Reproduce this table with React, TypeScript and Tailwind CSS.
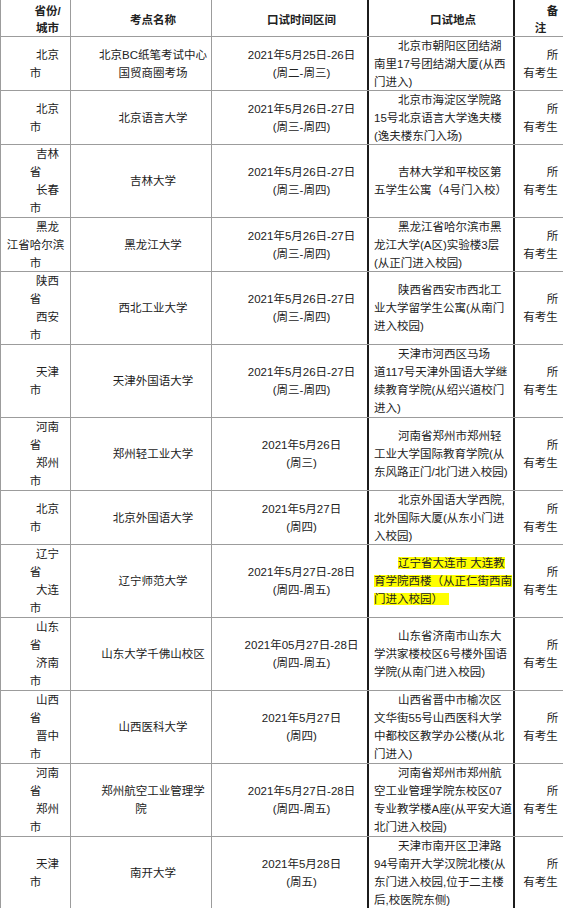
import React from 'react';

type Row = {
  h: string;
  c1: string[];
  c2: string[];
  c3: string[];
  c4: string[];
  hl?: boolean;
};

// lines starting with "+" get the 2em first-line indent of the source document
const rows: Row[] = [
  {
    h: 'h-[54px]',
    c1: ['+北京', '市'],
    c2: ['+北京BC纸笔考试中心', '+国贸商圈考场'],
    c3: ['+2021年5月25日-26日', '+(周二-周三)'],
    c4: ['+北京市朝阳区团结湖', '南里17号团结湖大厦(从西', '门进入)'],
  },
  {
    h: 'h-[54px]',
    c1: ['+北京', '市'],
    c2: ['+北京语言大学'],
    c3: ['+2021年5月26日-27日', '+(周三-周四)'],
    c4: ['+北京市海淀区学院路', '15号北京语言大学逸夫楼', '(逸夫楼东门入场)'],
  },
  {
    h: 'h-[73px]',
    c1: ['+吉林', '省', '+长春', '市'],
    c2: ['+吉林大学'],
    c3: ['+2021年5月26日-27日', '+(周三-周四)'],
    c4: ['+吉林大学和平校区第', '五学生公寓（4号门入校）'],
  },
  {
    h: 'h-[54px]',
    c1: ['+黑龙', '江省哈尔滨', '市'],
    c2: ['+黑龙江大学'],
    c3: ['+2021年5月26日-27日', '+(周三-周四)'],
    c4: ['+黑龙江省哈尔滨市黑', '龙江大学(A区)实验楼3层', '(从正门进入校园)'],
  },
  {
    h: 'h-[73px]',
    c1: ['+陕西', '省', '+西安', '市'],
    c2: ['+西北工业大学'],
    c3: ['+2021年5月26日-27日', '+(周三-周四)'],
    c4: ['+陕西省西安市西北工', '业大学留学生公寓(从南门', '进入校园)'],
  },
  {
    h: 'h-[73px]',
    c1: ['+天津', '市'],
    c2: ['+天津外国语大学'],
    c3: ['+2021年5月26日-27日', '+(周三-周四)'],
    c4: ['+天津市河西区马场', '道117号天津外国语大学继', '续教育学院(从绍兴道校门', '进入)'],
  },
  {
    h: 'h-[73px]',
    c1: ['+河南', '省', '+郑州', '市'],
    c2: ['+郑州轻工业大学'],
    c3: ['+2021年5月26日', '+(周三)'],
    c4: ['+河南省郑州市郑州轻', '工业大学国际教育学院(从', '东风路正门/北门进入校园)'],
  },
  {
    h: 'h-[54px]',
    c1: ['+北京', '市'],
    c2: ['+北京外国语大学'],
    c3: ['+2021年5月27日', '+(周四)'],
    c4: ['+北京外国语大学西院,', '北外国际大厦(从东小门进', '入校园)'],
  },
  {
    h: 'h-[73px]',
    c1: ['+辽宁', '省', '+大连', '市'],
    c2: ['+辽宁师范大学'],
    c3: ['+2021年5月27日-28日', '+(周四-周五)'],
    c4: ['+辽宁省大连市 大连教', '育学院西楼（从正仁街西南', '门进入校园）\u00a0\u00a0'],
    hl: true,
  },
  {
    h: 'h-[73px]',
    c1: ['+山东', '省', '+济南', '市'],
    c2: ['+山东大学千佛山校区'],
    c3: ['+2021年05月27日-28日', '+(周四-周五)'],
    c4: ['+山东省济南市山东大', '学洪家楼校区6号楼外国语', '学院(从南门进入校园)'],
  },
  {
    h: 'h-[73px]',
    c1: ['+山西', '省', '+晋中', '市'],
    c2: ['+山西医科大学'],
    c3: ['+2021年5月27日', '+(周四)'],
    c4: ['+山西省晋中市榆次区', '文华街55号山西医科大学', '中都校区教学办公楼(从北', '门进入)'],
  },
  {
    h: 'h-[73px]',
    c1: ['+河南', '省', '+郑州', '市'],
    c2: ['+郑州航空工业管理学', '院'],
    c3: ['+2021年5月27日-28日', '+(周四-周五)'],
    c4: ['+河南省郑州市郑州航', '空工业管理学院东校区07', '专业教学楼A座(从平安大道', '北门进入校园)'],
  },
  {
    h: 'h-[73px]',
    c1: ['+天津', '市'],
    c2: ['+南开大学'],
    c3: ['+2021年5月28日', '+(周五)'],
    c4: ['+天津市南开区卫津路', '94号南开大学汉院北楼(从', '东门进入校园,位于二主楼', '后,校医院东侧)'],
  },
];

function Lines({ lines, hl }: { lines: string[]; hl?: boolean }) {
  return (
    <>
      {lines.map((l, i) => {
        const text = l.replace(/^\+/, '');
        return (
          <div key={i} className={l.startsWith('+') ? 'pl-[24px] whitespace-pre' : 'whitespace-pre'}>
            {hl ? <span className="bg-[#ffff00]">{text}</span> : text}
          </div>
        );
      })}
    </>
  );
}

const c1 = 'w-[71px] shrink-0 flex flex-col justify-center text-center border-l border-r border-[#9c9c9c]';
const c2 = 'w-[141px] shrink-0 flex flex-col justify-center text-center border-r border-[#9c9c9c]';
const c3 = 'w-[155px] shrink-0 flex flex-col justify-center text-center';
const c4 = 'w-[148px] shrink-0 flex flex-col justify-center text-left pl-[5px] border-l-2 border-r-2 border-[#1c1c1c]';
const c5 = 'w-[51px] shrink-0 flex flex-col justify-center text-center';

export default function App() {
  return (
    <div className="w-[563px] h-[908px] overflow-hidden bg-white">
      <div className="w-[566px] text-[11.5px] leading-[18px] text-[#222] font-['Liberation_Sans','Noto_Sans_CJK_SC',sans-serif]">
        <div className="flex h-[37px] border-b border-[#9c9c9c] font-semibold leading-[17px]">
          <div className={c1 + ' pt-[4px]'}>
            <Lines lines={['+省份/', '+城市']} />
          </div>
          <div className={c2 + ' pt-[4px]'}>
            <Lines lines={['+考点名称']} />
          </div>
          <div className={c3 + ' pt-[4px]'}>
            <Lines lines={['+口试时间区间']} />
          </div>
          <div className={'w-[148px] shrink-0 flex flex-col justify-center text-center pt-[4px] border-l-2 border-r-2 border-[#1c1c1c]'}>
            <Lines lines={['+口试地点']} />
          </div>
          <div className={c5 + ' pt-[4px]'}>
            <Lines lines={['+备', '注']} />
          </div>
        </div>
        {rows.map((r, i) => (
          <div key={i} className={'flex border-b border-[#9c9c9c] ' + r.h}>
            <div className={c1}>
              <Lines lines={r.c1} />
            </div>
            <div className={c2}>
              <Lines lines={r.c2} />
            </div>
            <div className={c3}>
              <Lines lines={r.c3} />
            </div>
            <div className={c4}>
              <Lines lines={r.c4} hl={r.hl} />
            </div>
            <div className={c5}>
              <Lines lines={['+所', '有考生']} />
            </div>
          </div>
        ))}
      </div>
    </div>
  );
}
